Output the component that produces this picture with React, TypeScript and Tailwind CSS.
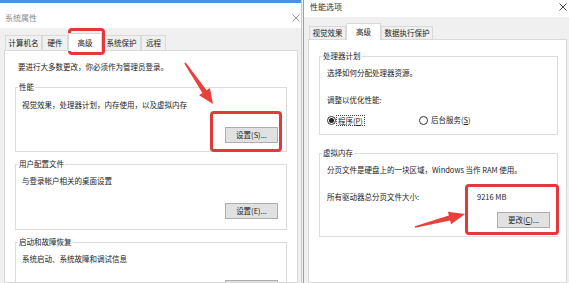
import type { ReactNode } from "react";
import clsx from "clsx";

function CloseIcon({ className }: { className?: string }) {
  return (
    <svg viewBox="0 0 8 8" className={clsx("h-[8px] w-[8px]", className)} aria-hidden="true">
      <path d="M0.5 0.5 L7.5 7.5 M7.5 0.5 L0.5 7.5" stroke="currentColor" strokeWidth="0.9" fill="none" />
    </svg>
  );
}

function Group({ title, children, className }: { title: string; children: ReactNode; className?: string }) {
  return (
    <fieldset className={clsx("border border-[#dcdcdc]", className)}>
      <legend className="ml-[2px] px-[1px] leading-[10px]">{title}</legend>
      {children}
    </fieldset>
  );
}

function WinButton({ children, className }: { children: ReactNode; className?: string }) {
  return (
    <button
      type="button"
      className={clsx(
        "h-[16px] w-[53px] border border-[#adadad] bg-[#e1e1e1] text-center leading-[14px]",
        className,
      )}
    >
      {children}
    </button>
  );
}

function Tab({ label, width, active, height }: { label: string; width: string; active?: boolean; height: string }) {
  return (
    <div
      className={clsx(
        "flex items-center justify-center border border-b-0 border-[#d9d9d9]",
        width,
        height,
        active ? "relative z-10 -mb-px bg-white" : "bg-[#f0f0f0]",
      )}
    >
      {label}
    </div>
  );
}

function Radio({ checked }: { checked?: boolean }) {
  return (
    <span className="flex h-[9px] w-[9px] items-center justify-center rounded-full border border-[#333] bg-white">
      {checked ? <span className="h-[5px] w-[5px] rounded-full bg-[#222]" /> : null}
    </span>
  );
}

export default function App() {
  return (
    <div className="relative flex h-[283px] w-[569px] overflow-hidden bg-[#f0f0f0] font-['Noto_Sans_CJK_SC',sans-serif] text-[7.5px] leading-[10px] text-[#222]">
      {/* 系统属性 */}
      <div className="flex w-[302px] flex-col border-r border-[#c9c9c9]">
        <div className="h-[3px] shrink-0 bg-[#4a93dc]" />
        <div className="flex h-[25px] shrink-0 items-center justify-between bg-white pl-[5px] pr-[1px] pt-[4px] text-[8px] text-[#8a8a8a]">
          <span>系统属性</span>
          <CloseIcon className="text-[#8a8a8a]" />
        </div>
        <div className="flex min-h-0 flex-1 flex-col pl-[4px] pr-[3px] pt-[5px]">
          <div className="flex h-[17px] shrink-0 items-end pl-[1px]">
            <Tab label="计算机名" width="w-[37px]" height="h-[15px]" />
            <Tab label="硬件" width="w-[26px]" height="h-[15px]" />
            <Tab label="高级" width="w-[34px]" height="h-[18px]" active />
            <Tab label="系统保护" width="w-[39px]" height="h-[15px]" />
            <Tab label="远程" width="w-[25px]" height="h-[15px]" />
          </div>
          <div className="min-h-0 flex-1 overflow-hidden border border-[#d9d9d9] bg-white pl-[10px] pr-[10px] pt-[11px]">
            <p className="ml-[3px]">要进行大多数更改，你必须作为管理员登录。</p>
            <Group title="性能" className="mt-[10px]">
              <div className="flex flex-col pb-[8px] pl-[6px] pr-[8px] pt-[8px]">
                <p>视觉效果，处理器计划，内存使用，以及虚拟内存</p>
                <WinButton className="mt-[17px] self-end">设置(S)...</WinButton>
              </div>
            </Group>
            <Group title="用户配置文件" className="mt-[7px]">
              <div className="flex flex-col pb-[10px] pl-[6px] pr-[8px] pt-[7px]">
                <p>与登录帐户相关的桌面设置</p>
                <WinButton className="mt-[17px] self-end">设置(E)...</WinButton>
              </div>
            </Group>
            <Group title="启动和故障恢复" className="mt-[7px]">
              <div className="flex flex-col pb-[10px] pl-[6px] pr-[8px] pt-[7px]">
                <p>系统启动、系统故障和调试信息</p>
                <WinButton className="mt-[16px] self-end">设置(T)...</WinButton>
              </div>
            </Group>
          </div>
        </div>
      </div>

      {/* 性能选项 */}
      <div className="ml-[1px] flex flex-1 flex-col border-l border-[#a0a0a0]">
        <div className="flex h-[17px] shrink-0 items-center justify-between bg-white pb-[3px] pl-[6px] pr-[2px] text-[8px] text-[#333]">
          <span>性能选项</span>
          <CloseIcon className="text-[#333]" />
        </div>
        <div className="flex min-h-0 flex-1 flex-col pl-[4px] pr-[2px] pt-[6px]">
          <div className="flex h-[16px] shrink-0 items-end pl-[1px]">
            <Tab label="视觉效果" width="w-[37px]" height="h-[13px]" />
            <Tab label="高级" width="w-[35px]" height="h-[17px]" active />
            <Tab label="数据执行保护" width="w-[52px]" height="h-[13px]" />
          </div>
          <div className="min-h-0 flex-1 overflow-hidden border border-[#d9d9d9] bg-white pl-[10px] pr-[8px] pt-[11px]">
            <Group title="处理器计划">
              <div className="px-[7px] pb-[8px] pt-[7px]">
                <p>选择如何分配处理器资源。</p>
                <p className="mt-[17px]">调整以优化性能:</p>
                <div className="mt-[9px] flex h-[12px] items-center">
                  <div className="flex w-[92px] items-center">
                    <Radio checked />
                    <span className="border border-dotted border-[#444] px-[1px] leading-[9px]">
                      程序(<span className="underline">P</span>)
                    </span>
                  </div>
                  <div className="flex items-center gap-[3px]">
                    <Radio />
                    <span>
                      后台服务(<span className="underline">S</span>)
                    </span>
                  </div>
                </div>
              </div>
            </Group>
            <Group title="虚拟内存" className="mt-[13px]">
              <div className="px-[7px] pb-[8px] pt-[7px]">
                <p>分页文件是硬盘上的一块区域，Windows 当作 RAM 使用。</p>
                <div className="mt-[17px] flex">
                  <p className="flex-1">所有驱动器总分页文件大小:</p>
                  <div className="flex w-[73px] flex-col">
                    <p>9216 MB</p>
                    <WinButton className="mt-[10px] self-end">
                      更改(<span className="underline">C</span>)...
                    </WinButton>
                  </div>
                </div>
              </div>
            </Group>
          </div>
        </div>
      </div>

      {/* 标注 */}
      <div className="pointer-events-none absolute left-[68px] top-[28px] h-[27px] w-[37px] rounded-[4px] border-[3px] border-[#e23a3c]" />
      <div className="pointer-events-none absolute left-[210px] top-[111px] h-[41px] w-[72px] rounded-[4px] border-[3px] border-[#e23a3c]" />
      <div className="pointer-events-none absolute left-[465px] top-[184px] h-[51px] w-[94px] rounded-[4px] border-[3px] border-[#e23a3c]" />
      <svg className="pointer-events-none absolute left-0 top-0 h-[283px] w-[569px]" viewBox="0 0 569 283" aria-hidden="true">
        <polygon
          points="184.3,63.5 202.4,93.0 199.1,95.3 213,104 209.9,87.9 206.6,90.2 185.7,62.5"
          fill="#e8403d"
        />
        <polygon
          points="415.2,227.8 450.1,220.4 451.1,224.3 465,214 447.9,211.7 448.9,215.6 414.8,226.2"
          fill="#e8403d"
        />
      </svg>
    </div>
  );
}
